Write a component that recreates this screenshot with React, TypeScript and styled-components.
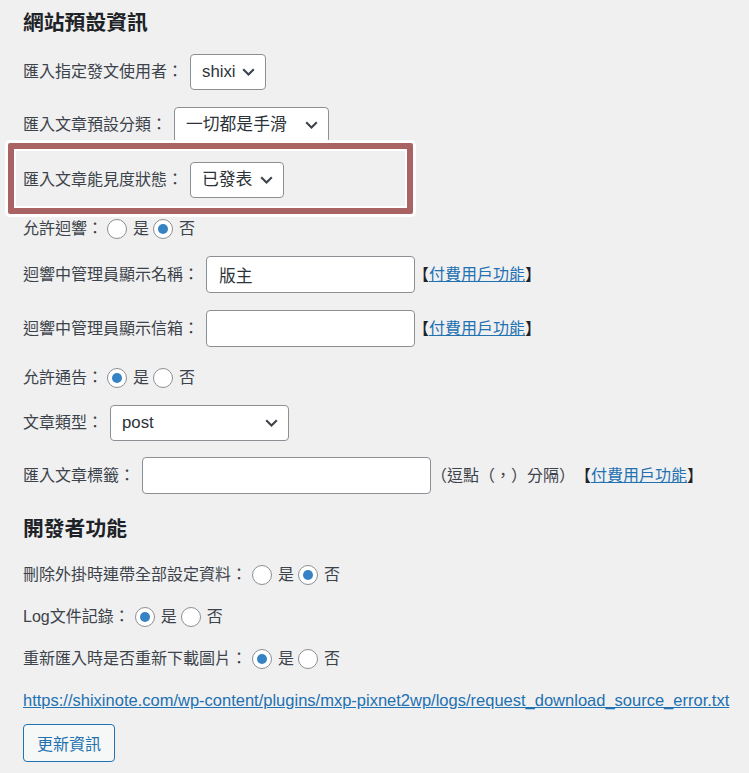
import React from "react";
import styled, { createGlobalStyle } from "styled-components";

const font = `"Liberation Sans", "Noto Sans CJK TC", sans-serif`;

const GlobalStyle = createGlobalStyle`
  body {
    margin: 0;
    background: #f0f0f1;
  }
`;

const Page = styled.div`
  width: 749px;
  min-height: 773px;
  box-sizing: border-box;
  padding: 10px 0 0 23px;
  font-family: ${font};
  font-size: 16px;
  color: #3c434a;
`;

const Title = styled.h2<{ $mt: number }>`
  margin: ${(p) => p.$mt}px 0 0;
  font-size: 20.8px;
  line-height: 26px;
  font-weight: 700;
  color: #1d2327;
`;

const Row = styled.div<{ $mt: number }>`
  position: relative;
  display: flex;
  align-items: center;
  margin-top: ${(p) => p.$mt}px;
  white-space: nowrap;
  line-height: 24px;
`;

const Label = styled.span<{ $gap?: number }>`
  margin-right: ${(p) => p.$gap ?? 7}px;
`;

const SelectBox = styled.div<{ $w: number }>`
  width: ${(p) => p.$w}px;
  height: 36px;
  box-sizing: border-box;
  display: flex;
  align-items: center;
  justify-content: space-between;
  padding: 0 10px 0 11px;
  border: 1px solid #8c8f94;
  border-radius: 4px;
  background: #fff;
  font-size: 16.8px;
  color: #2c3338;
`;

const TextInput = styled.input<{ $w: number }>`
  width: ${(p) => p.$w}px;
  height: 37px;
  box-sizing: border-box;
  margin: 0;
  padding: 0 12px;
  border: 1px solid #8c8f94;
  border-radius: 4px;
  background: #fff;
  font-family: ${font};
  font-size: 16.8px;
  color: #2c3338;
  outline: none;
`;

const Radio = styled.span<{ $on?: boolean }>`
  width: 20px;
  height: 20px;
  box-sizing: border-box;
  display: flex;
  align-items: center;
  justify-content: center;
  border: 1px solid #8c8f94;
  border-radius: 50%;
  background: #fff;

  &::before {
    content: "";
    display: ${(p) => (p.$on ? "block" : "none")};
    width: 10px;
    height: 10px;
    border-radius: 50%;
    background: #3582c4;
  }
`;

const RadioText = styled.span`
  margin: 0 4px 0 6px;
`;

const Link = styled.a`
  color: #2271b1;
  text-decoration: underline;
  cursor: pointer;
`;

const Note = styled.span<{ $gap: number }>`
  margin-left: ${(p) => p.$gap}px;
  color: #3c434a;
`;

const Bracket = styled.span`
  color: #1d2327;
`;

const UrlLine = styled(Link)`
  display: block;
  margin-top: 17px;
  font-size: 16.5px;
  line-height: 24px;
`;

const Button = styled.button`
  display: block;
  margin-top: 12px;
  width: 92px;
  height: 38px;
  padding: 0;
  border: 1px solid #2271b1;
  border-radius: 4px;
  background: #f6f7f7;
  color: #2271b1;
  font-family: ${font};
  font-size: 16px;
  cursor: pointer;
`;

const Highlight = styled.div`
  position: absolute;
  left: -15px;
  top: -19px;
  bottom: -16px;
  width: 405px;
  box-sizing: border-box;
  border: 6px solid #a96363;
  border-radius: 2px;
  box-shadow: 0 0 0 3px #fff, inset 0 0 0 2px #fff;
  pointer-events: none;
`;

const Chevron = () => (
  <svg width="13" height="8" viewBox="0 0 13 8">
    <polyline
      points="1.2,1.3 6.5,6.5 11.8,1.3"
      fill="none"
      stroke="#3c434a"
      strokeWidth="2.1"
    />
  </svg>
);

const Select = ({ w, value }: { w: number; value: string }) => (
  <SelectBox $w={w}>
    <span>{value}</span>
    <Chevron />
  </SelectBox>
);

const YesNo = ({ yes }: { yes: boolean }) => (
  <>
    <Radio $on={yes} />
    <RadioText>是</RadioText>
    <Radio $on={!yes} />
    <RadioText>否</RadioText>
  </>
);

const PaidLink = ({ gap }: { gap: number }) => (
  <Note $gap={gap}>
    <Bracket>【</Bracket>
    <Link>付費用戶功能</Link>
    <Bracket>】</Bracket>
  </Note>
);

const App = () => {
  return (
    <Page>
      <GlobalStyle />
      <Title $mt={0}>網站預設資訊</Title>

      <Row $mt={18}>
        <Label>匯入指定發文使用者：</Label>
        <Select w={76} value="shixi" />
      </Row>
      <Row $mt={17}>
        <Label>匯入文章預設分類：</Label>
        <Select w={155} value="一切都是手滑" />
      </Row>
      <Row $mt={19}>
        <Label>匯入文章能見度狀態：</Label>
        <Select w={94} value="已發表" />
        <Highlight />
      </Row>
      <Row $mt={19}>
        <Label $gap={4}>允許迴響：</Label>
        <YesNo yes={false} />
      </Row>
      <Row $mt={15}>
        <Label>迴響中管理員顯示名稱：</Label>
        <TextInput $w={209} defaultValue="版主" />
        <PaidLink gap={-2} />
      </Row>
      <Row $mt={17}>
        <Label>迴響中管理員顯示信箱：</Label>
        <TextInput $w={209} defaultValue="" />
        <PaidLink gap={-2} />
      </Row>
      <Row $mt={19}>
        <Label $gap={4}>允許通告：</Label>
        <YesNo yes={true} />
      </Row>
      <Row $mt={15}>
        <Label>文章類型：</Label>
        <Select w={179} value="post" />
      </Row>
      <Row $mt={16}>
        <Label>匯入文章標籤：</Label>
        <TextInput $w={289} defaultValue="" />
        <Note $gap={0}>（逗點（，）分隔）</Note>
        <PaidLink gap={0} />
      </Row>

      <Title $mt={22}>開發者功能</Title>

      <Row $mt={21}>
        <Label $gap={5}>刪除外掛時連帶全部設定資料：</Label>
        <YesNo yes={false} />
      </Row>
      <Row $mt={18}>
        <Label $gap={5}>Log文件記錄：</Label>
        <YesNo yes={true} />
      </Row>
      <Row $mt={18}>
        <Label $gap={5}>重新匯入時是否重新下載圖片：</Label>
        <YesNo yes={true} />
      </Row>

      <UrlLine>
        https://shixinote.com/wp-content/plugins/mxp-pixnet2wp/logs/request_download_source_error.txt
      </UrlLine>
      <Button>更新資訊</Button>
    </Page>
  );
};

export default App;
